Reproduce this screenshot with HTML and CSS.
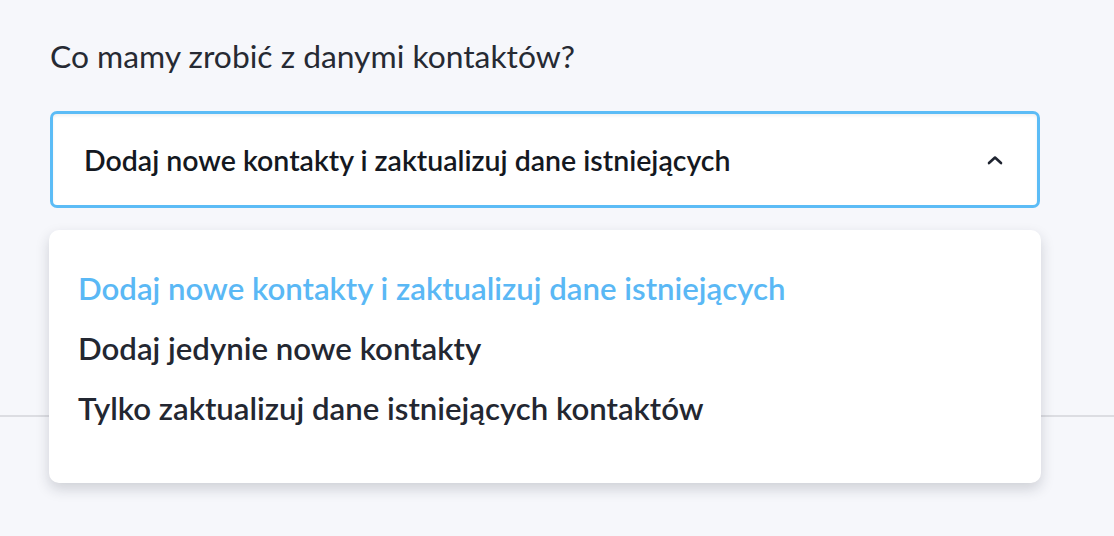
FILE: index.html
```html
<!DOCTYPE html>
<html lang="pl">
<head>
<meta charset="utf-8">
<link rel="stylesheet" href="styles.css">
</head>
<body>
<div class="page">
  <div class="field">
    <div class="label">Co mamy zrobić z danymi kontaktów?</div>
    <div class="select">
      <span class="select-value">Dodaj nowe kontakty i zaktualizuj dane istniejących</span>
      <svg class="chevron" width="16" height="10" viewBox="0 0 16 10"><path d="M2 8 L8 2.5 L14 8" fill="none" stroke="#1f2430" stroke-width="2.6" stroke-linecap="round" stroke-linejoin="round"/></svg>
    </div>
  </div>
  <div class="divider"></div>
  <ul class="menu">
    <li class="option active">Dodaj nowe kontakty i zaktualizuj dane istniejących</li>
    <li class="option">Dodaj jedynie nowe kontakty</li>
    <li class="option">Tylko zaktualizuj dane istniejących kontaktów</li>
  </ul>
</div>
</body>
</html>
```
FILE: styles.css
```css
html, body {
  margin: 0;
  padding: 0;
}
body {
  background: #f6f7fb;
  font-family: Lato, "Open Sans", sans-serif;
  color: #1f2430;
  width: 1114px;
  height: 536px;
  overflow: hidden;
}
.page {
  position: relative;
  height: 536px;
}
.field {
  padding: 36px 74px 0 50px;
}
.label {
  font-size: 31.8px;
  line-height: 40px;
  color: #262a33;
}
.select {
  margin-top: 35px;
  border: 3px solid #5cbcf6;
  border-radius: 7px;
  background: #fff;
  display: flex;
  align-items: center;
  justify-content: space-between;
  padding: 0 34px 0 31px;
  box-sizing: border-box;
  height: 97px;
  box-shadow: inset 0 2px 3px rgba(0,0,0,0.06);
}
.select-value {
  font-size: 28.5px;
  font-weight: 600;
  color: #141821;
}
.chevron {
  display: block;
}
.divider {
  margin-top: 207px;
  height: 2px;
  background: #dcdde2;
}
.menu {
  position: absolute;
  left: 49px;
  top: 230px;
  width: 992px;
  height: 253px;
  margin: 0;
  padding: 28px 0 0 29px;
  box-sizing: border-box;
  list-style: none;
  background: #fff;
  border-radius: 10px;
  box-shadow: 0 6px 14px rgba(30, 35, 50, 0.18);
}
.option {
  font-size: 31.2px;
  font-weight: 600;
  line-height: 60px;
  color: #232731;
}
.option.active {
  color: #5ab8f5;
}
```
